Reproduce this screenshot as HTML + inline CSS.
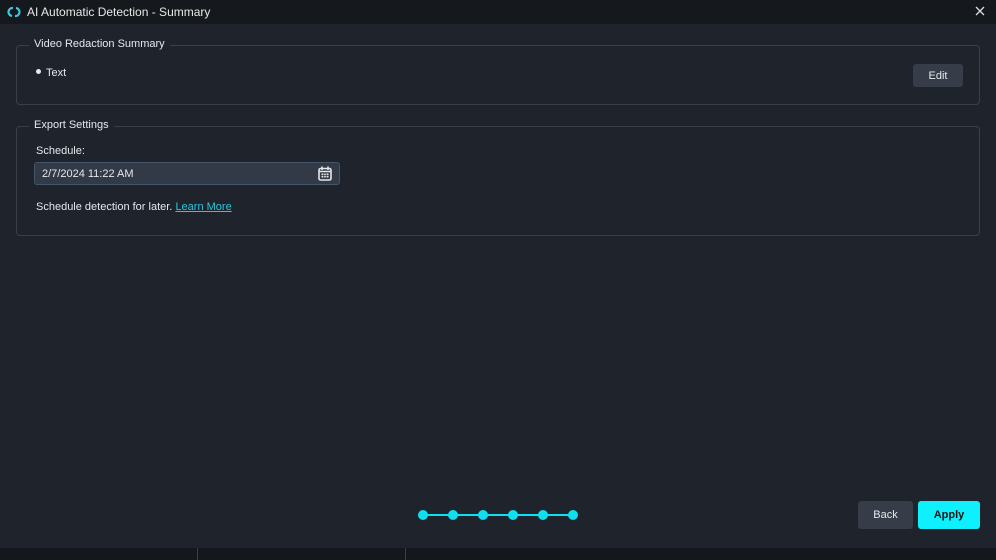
<!DOCTYPE html>
<html><head><style>
*{margin:0;padding:0;box-sizing:border-box}
body{width:996px;height:560px;background:#1f232c;font-family:"Liberation Sans",sans-serif;color:#e6e8ec;position:relative;overflow:hidden;font-size:11px}
.title{position:absolute;left:0;top:0;width:996px;height:24px;background:#15181d}
.title span{position:absolute;left:27px;top:5px;font-size:12px;color:#e8e8e8}
.fs{position:absolute;border:1px solid #3a404b;border-radius:4px}
.lg{position:absolute;top:-8px;left:12px;background:#1f232c;padding:0 5px;font-size:11px;color:#e6e8ec}
.btn{position:absolute;border-radius:3px;font-size:11px;text-align:center}
.dot{position:absolute;top:510px;width:10px;height:10px;border-radius:50%;background:#0fe0f0}
</style></head><body>
<div class="title">
<svg style="position:absolute;left:6px;top:5px" width="16" height="14" viewBox="0 0 16 14"><path d="M7 3 A4 4 0 1 0 6 11 M9 11 A4 4 0 1 0 10 3" fill="none" stroke="#3dc8e0" stroke-width="2.2"/></svg>
<span>AI Automatic Detection - Summary</span>
<svg style="position:absolute;left:975px;top:6px" width="10" height="10"><path d="M1 1L9 9M9 1L1 9" stroke="#ddd" stroke-width="1.3"/></svg>
</div>
<div class="fs" style="left:16px;top:45px;width:964px;height:60px">
<div class="lg">Video Redaction Summary</div>
<div style="position:absolute;left:19px;top:21px"><span style="display:inline-block;width:5px;height:5px;border-radius:50%;background:#e6e8ec;vertical-align:2px;margin-right:5px"></span>Text</div>
<div class="btn" style="left:896px;top:18px;width:50px;height:23px;background:#363d48;line-height:25px">Edit</div>
</div>
<div class="fs" style="left:16px;top:126px;width:964px;height:110px">
<div class="lg">Export Settings</div>
<div style="position:absolute;left:19px;top:18px">Schedule:</div>
<div style="position:absolute;left:17px;top:35px;width:306px;height:23px;background:#313a46;border:1px solid #44556a;border-radius:3px;padding:5px 7px">2/7/2024 11:22 AM
<svg style="position:absolute;right:7px;top:3px" width="14" height="15" viewBox="0 0 14 15"><rect x="1" y="2.5" width="12" height="11.5" rx="1.5" fill="none" stroke="#e6e6e6" stroke-width="1.6"/><path d="M4 0.5V4M10 0.5V4M1 5.5H13" stroke="#e6e6e6" stroke-width="1.6"/><rect x="3.5" y="7.5" width="7" height="4" fill="#e6e6e6"/><path d="M5.8 7.5V11.5M8.2 7.5V11.5M3.5 9.5H10.5" stroke="#313a46" stroke-width="0.8"/></svg></div>
<div style="position:absolute;left:19px;top:74px">Schedule detection for later. <span style="color:#2ec6dc;text-decoration:underline">Learn More</span></div>
</div>
<div style="position:absolute;left:422px;top:514px;width:152px;height:2px;background:#0fe0f0"></div>
<div class="dot" style="left:418px"></div><div class="dot" style="left:448px"></div><div class="dot" style="left:478px"></div><div class="dot" style="left:508px"></div><div class="dot" style="left:538px"></div><div class="dot" style="left:568px"></div>
<div class="btn" style="left:858px;top:501px;width:55px;height:28px;background:#363d48;line-height:28px">Back</div>
<div class="btn" style="left:918px;top:501px;width:62px;height:28px;background:#0ff0ff;line-height:28px;color:#111;font-weight:bold">Apply</div>
<div style="position:absolute;left:0;top:548px;width:996px;height:12px;background:#14171c"></div>
<div style="position:absolute;left:197px;top:548px;width:1px;height:12px;background:#3a404b"></div>
<div style="position:absolute;left:405px;top:548px;width:1px;height:12px;background:#3a404b"></div>
</body></html>
